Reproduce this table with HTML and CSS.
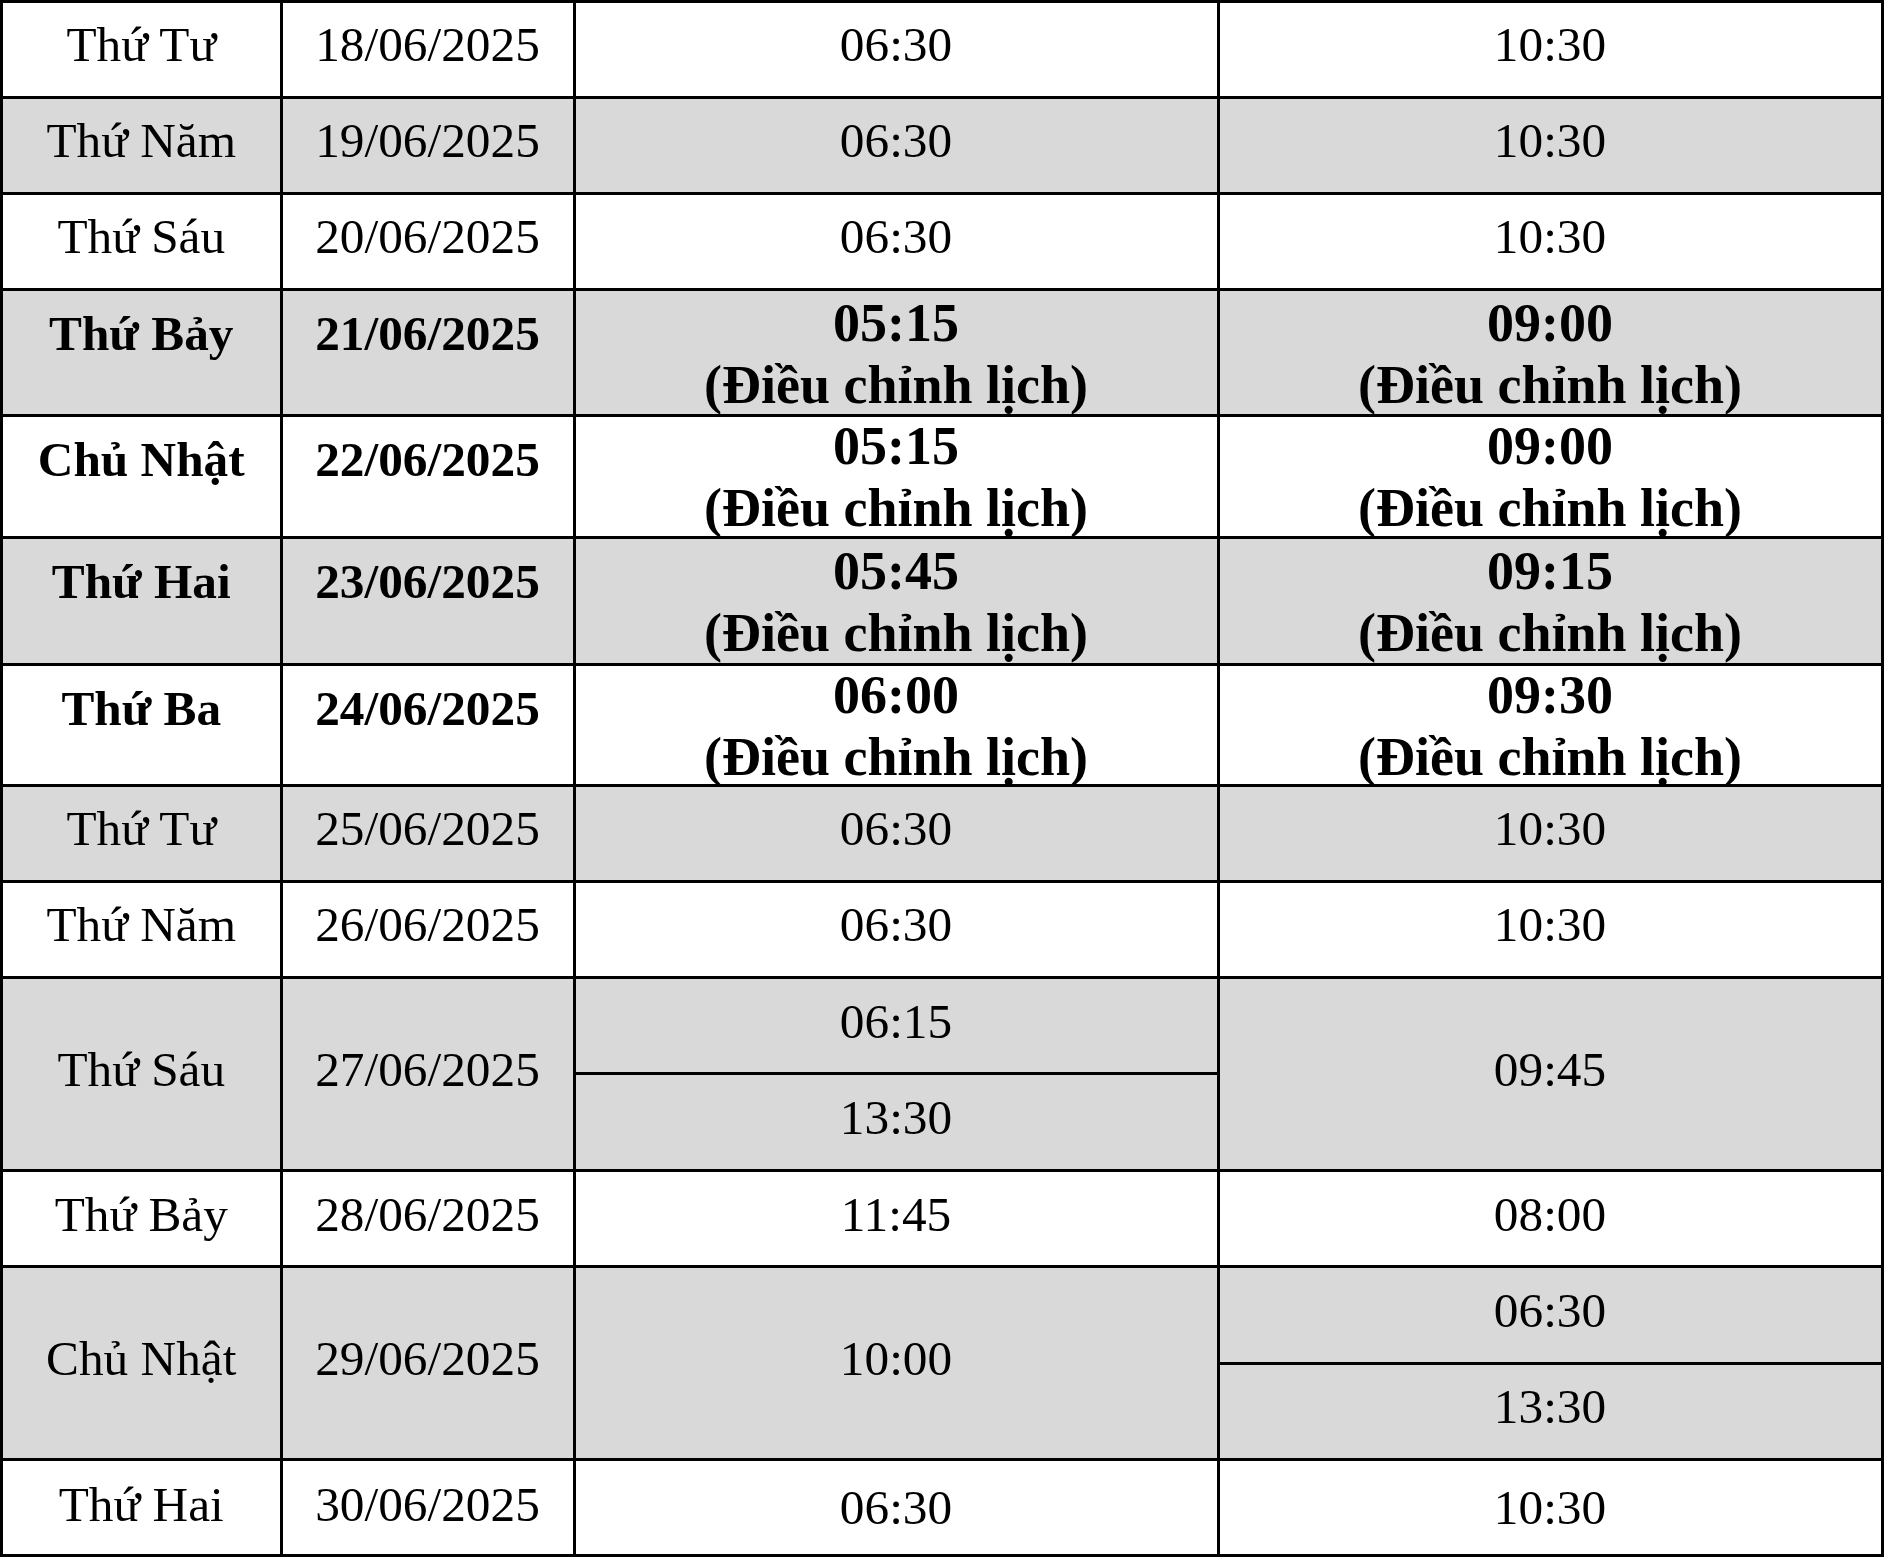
FILE: index.html
```html
<!DOCTYPE html>
<html lang="vi">
<head>
<meta charset="utf-8">
<title>Lịch</title>
<link rel="stylesheet" href="styles.css">
</head>
<body>
<div class="schedule">
  <div class="c">Thứ Tư</div><div class="c">18/06/2025</div><div class="c">06:30</div><div class="c">10:30</div>

  <div class="c g">Thứ Năm</div><div class="c g">19/06/2025</div><div class="c g">06:30</div><div class="c g">10:30</div>

  <div class="c">Thứ Sáu</div><div class="c">20/06/2025</div><div class="c">06:30</div><div class="c">10:30</div>

  <div class="c g bd">Thứ Bảy</div><div class="c g bd">21/06/2025</div>
  <div class="c g bt"><span>05:15</span><span>(Điều chỉnh lịch)</span></div>
  <div class="c g bt"><span>09:00</span><span>(Điều chỉnh lịch)</span></div>

  <div class="c bd">Chủ Nhật</div><div class="c bd">22/06/2025</div>
  <div class="c bt short"><span>05:15</span><span>(Điều chỉnh lịch)</span></div>
  <div class="c bt short"><span>09:00</span><span>(Điều chỉnh lịch)</span></div>

  <div class="c g bd">Thứ Hai</div><div class="c g bd">23/06/2025</div>
  <div class="c g bt"><span>05:45</span><span>(Điều chỉnh lịch)</span></div>
  <div class="c g bt"><span>09:15</span><span>(Điều chỉnh lịch)</span></div>

  <div class="c bd">Thứ Ba</div><div class="c bd">24/06/2025</div>
  <div class="c bt short"><span>06:00</span><span>(Điều chỉnh lịch)</span></div>
  <div class="c bt short"><span>09:30</span><span>(Điều chỉnh lịch)</span></div>

  <div class="c g">Thứ Tư</div><div class="c g">25/06/2025</div><div class="c g">06:30</div><div class="c g">10:30</div>

  <div class="c">Thứ Năm</div><div class="c">26/06/2025</div><div class="c">06:30</div><div class="c">10:30</div>

  <div class="c g span2">Thứ Sáu</div><div class="c g span2">27/06/2025</div><div class="c g">06:15</div><div class="c g span2">09:45</div>
  <div class="c g">13:30</div>

  <div class="c">Thứ Bảy</div><div class="c">28/06/2025</div><div class="c">11:45</div><div class="c">08:00</div>

  <div class="c g span2">Chủ Nhật</div><div class="c g span2">29/06/2025</div><div class="c g span2">10:00</div><div class="c g">06:30</div>
  <div class="c g">13:30</div>

  <div class="c last-day">Thứ Hai</div><div class="c last-day">30/06/2025</div><div class="c mid">06:30</div><div class="c mid">10:30</div>
</div>
</body>
</html>
```

FILE: styles.css
```css
html, body {
  margin: 0;
  padding: 0;
  background: #ffffff;
}

.schedule {
  display: grid;
  width: max-content;
  grid-template-columns: 276.5px 290px 641px 661px;
  grid-template-rows: 92.5px 93px 93.3px 123px 119px 124px 118px 93px 93px 93.5px 93.5px 93.5px 93.5px 93px 93.5px;
  gap: 3px;
  padding: 3px;
  background: #000000;
  font-family: "Liberation Serif", "Times New Roman", serif;
  font-size: 49.3px;
  color: #000000;
}

.c {
  background: #ffffff;
  display: flex;
  flex-direction: column;
  align-items: center;
  justify-content: center;
  text-align: center;
  white-space: nowrap;
  box-sizing: border-box;
  padding-bottom: 9px;
}

.g {
  background: #d9d9d9;
}

.span2 {
  grid-row: span 2;
}

.bd {
  font-weight: bold;
  justify-content: flex-start;
  padding: 14px 0 0;
}

.bt {
  font-weight: bold;
  font-size: 54px;
  line-height: 1.15;
  justify-content: flex-start;
  padding: 1.5px 0 0;
}

.bt.short {
  padding-top: 0;
}

.bt.short span:first-child {
  margin-top: -2px;
}

.last-day {
  padding-bottom: 6px;
}

.mid {
  padding-bottom: 0;
}
```
